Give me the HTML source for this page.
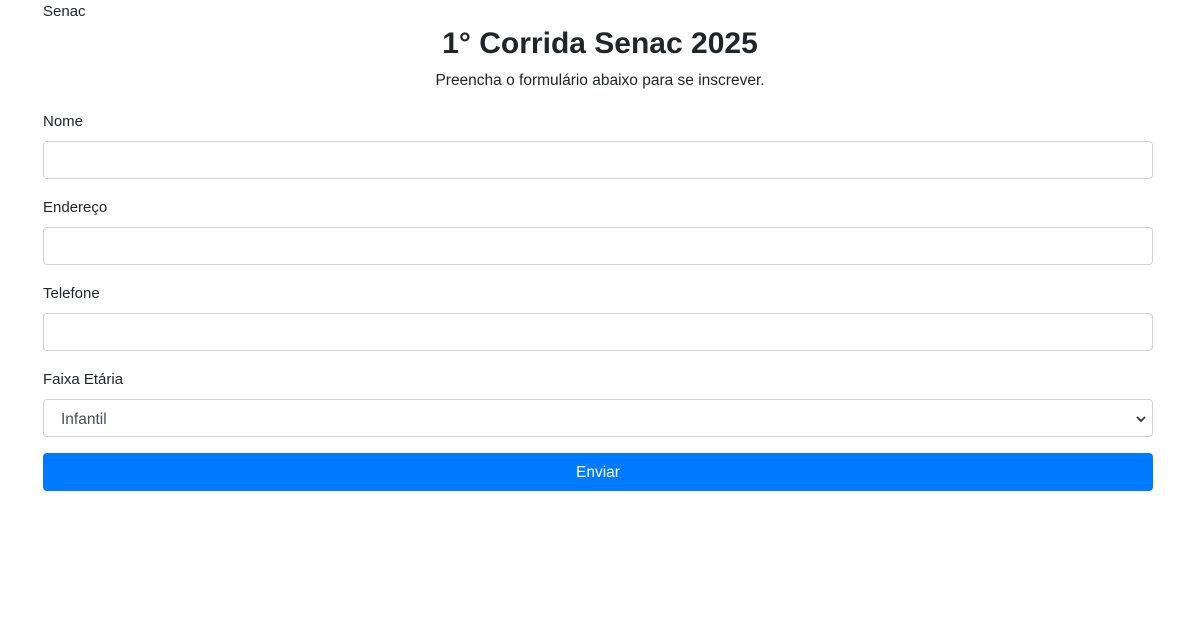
<!DOCTYPE html>
<html><head><meta charset="utf-8"><style>
body{margin:0;font-family:"Liberation Sans",sans-serif;color:#212529;font-size:16px;background:#fff;}
.t{position:absolute;left:43px;top:3px;font-size:15px;}
h1{position:absolute;left:0;width:1200px;top:24px;margin:0;text-align:center;font-size:30px;font-weight:bold;line-height:40px;}
.sub{position:absolute;left:0;width:1200px;top:72px;text-align:center;font-size:15.5px;}
label{position:absolute;left:43px;font-size:15px;}
.in{position:absolute;left:43px;width:1108px;height:36px;border:1px solid #ced4da;border-radius:4px;background:#fff;}
.sel{font-size:15.5px;color:#495057;line-height:40px;box-sizing:border-box;padding-left:17px;}
.btn{position:absolute;left:43px;top:453px;width:1110px;height:38px;background:#007bff;border-radius:4px;color:#fff;text-align:center;line-height:40px;font-size:15.5px;}
</style></head><body>
<div class="t">Senac</div>
<h1>1° Corrida Senac 2025</h1>
<div class="sub">Preencha o formulário abaixo para se inscrever.</div>
<label style="top:113px">Nome</label><div class="in" style="top:141px"></div>
<label style="top:199px">Endereço</label><div class="in" style="top:227px"></div>
<label style="top:285px">Telefone</label><div class="in" style="top:313px"></div>
<label style="top:371px">Faixa Etária</label>
<div class="in sel" style="top:399px;height:38px;width:1110px">Infantil
<svg style="position:absolute;right:6px;top:15px" width="10" height="8" viewBox="0 0 10 8"><path d="M1 2l4 4 4-4" stroke="#333" stroke-width="1.8" fill="none"/></svg></div>
<div class="btn">Enviar</div>
</body></html>
